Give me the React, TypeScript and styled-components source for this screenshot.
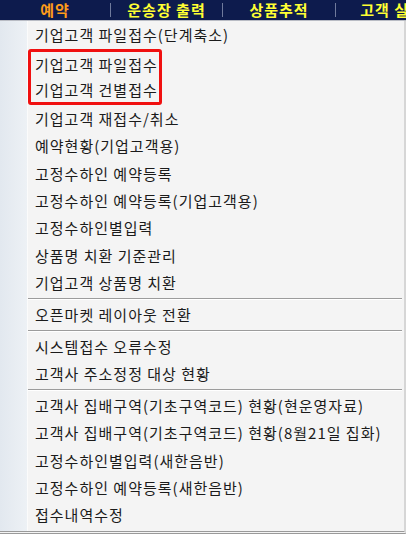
import styled, { createGlobalStyle } from "styled-components";

const GlobalStyle = createGlobalStyle`
  html, body {
    margin: 0;
    padding: 0;
    background: #ffffff;
  }
  body {
    width: 406px;
    height: 534px;
    overflow: hidden;
    font-family: "Noto Sans CJK KR", "Noto Sans", sans-serif;
  }
`;

const Page = styled.div`
  width: 406px;
  height: 534px;
  display: flex;
  flex-direction: column;
  overflow: hidden;
`;

const TopBar = styled.div`
  height: 20px;
  background: #0d1b4d;
  border-bottom: 1px solid #b9bcc4;
  display: flex;
  align-items: center;
  flex-shrink: 0;
  white-space: nowrap;
`;

const BarItem = styled.div<{ $w: number; $active?: boolean }>`
  width: ${(p) => p.$w}px;
  flex-shrink: 0;
  text-align: center;
  font-size: 15px;
  font-weight: 700;
  line-height: 20px;
  letter-spacing: 1px;
  color: ${(p) => (p.$active ? "#ff9c1a" : "#ffff33")};
`;

const BarSep = styled.div`
  width: 1px;
  height: 14px;
  background: #6f7a9c;
  flex-shrink: 0;
`;

const Menu = styled.div`
  flex: 1;
  display: flex;
  background: #f4f4f4;
  border-right: 2px solid #d6d6d6;
  border-bottom: 3px double #9a9a9a;
`;

const Gutter = styled.div`
  width: 27px;
  flex-shrink: 0;
  background: linear-gradient(to right, #e2e8ef, #edf1f5);
  border-right: 1px solid #fbfbfb;
`;

const List = styled.div`
  flex: 1;
  display: flex;
  flex-direction: column;
  align-items: stretch;
`;

const Item = styled.div<{ $h?: number }>`
  height: ${(p) => p.$h ?? 27.3}px;
  flex-shrink: 0;
  padding-left: 7px;
  display: flex;
  align-items: center;
  font-size: 15px;
  color: #1b1b1b;
  white-space: nowrap;
  letter-spacing: 1px;
`;

const Group = styled.div`
  align-self: flex-start;
  flex-shrink: 0;
  border: 3px solid #f01010;
  border-radius: 3px;
  padding-right: 1px;
  margin-top: 1px;
  ${Item} {
    padding-left: 4px;
  }
`;

const Separator = styled.div`
  height: 4.7px;
  flex-shrink: 0;
  display: flex;
  align-items: center;
  margin-right: 2px;
  &::before {
    content: "";
    flex: 1;
    height: 1px;
    background: #9c9c9c;
    box-shadow: 0 1px 0 #ffffff;
  }
`;

const beforeGroup = ["기업고객 파일접수(단계축소)"];
const grouped = ["기업고객 파일접수", "기업고객 건별접수"];
const sections = [
  [
    "기업고객 재접수/취소",
    "예약현황(기업고객용)",
    "고정수하인 예약등록",
    "고정수하인 예약등록(기업고객용)",
    "고정수하인별입력",
    "상품명 치환 기준관리",
    "기업고객 상품명 치환",
  ],
  ["오픈마켓 레이아웃 전환"],
  ["시스템접수 오류수정", "고객사 주소정정 대상 현황"],
  [
    "고객사 집배구역(기초구역코드) 현황(현운영자료)",
    "고객사 집배구역(기초구역코드) 현황(8월21일 집화)",
    "고정수하인별입력(새한음반)",
    "고정수하인 예약등록(새한음반)",
    "접수내역수정",
  ],
];

export default function App() {
  return (
    <Page>
      <GlobalStyle />
      <TopBar>
        <BarItem $w={110} $active>
          예약
        </BarItem>
        <BarSep />
        <BarItem $w={111}>운송장 출력</BarItem>
        <BarSep />
        <BarItem $w={112}>상품추적</BarItem>
        <BarSep />
        <BarItem $w={112}>고객 실적</BarItem>
      </TopBar>
      <Menu>
        <Gutter />
        <List>
          {beforeGroup.map((t) => (
            <Item key={t}>{t}</Item>
          ))}
          <Group>
            {grouped.map((t) => (
              <Item key={t} $h={24.8}>
                {t}
              </Item>
            ))}
          </Group>
          {sections.map((sec, i) => (
            <div key={i} style={{ display: "contents" }}>
              {i > 0 && <Separator />}
              {sec.map((t) => (
                <Item key={t}>{t}</Item>
              ))}
            </div>
          ))}
        </List>
      </Menu>
    </Page>
  );
}
